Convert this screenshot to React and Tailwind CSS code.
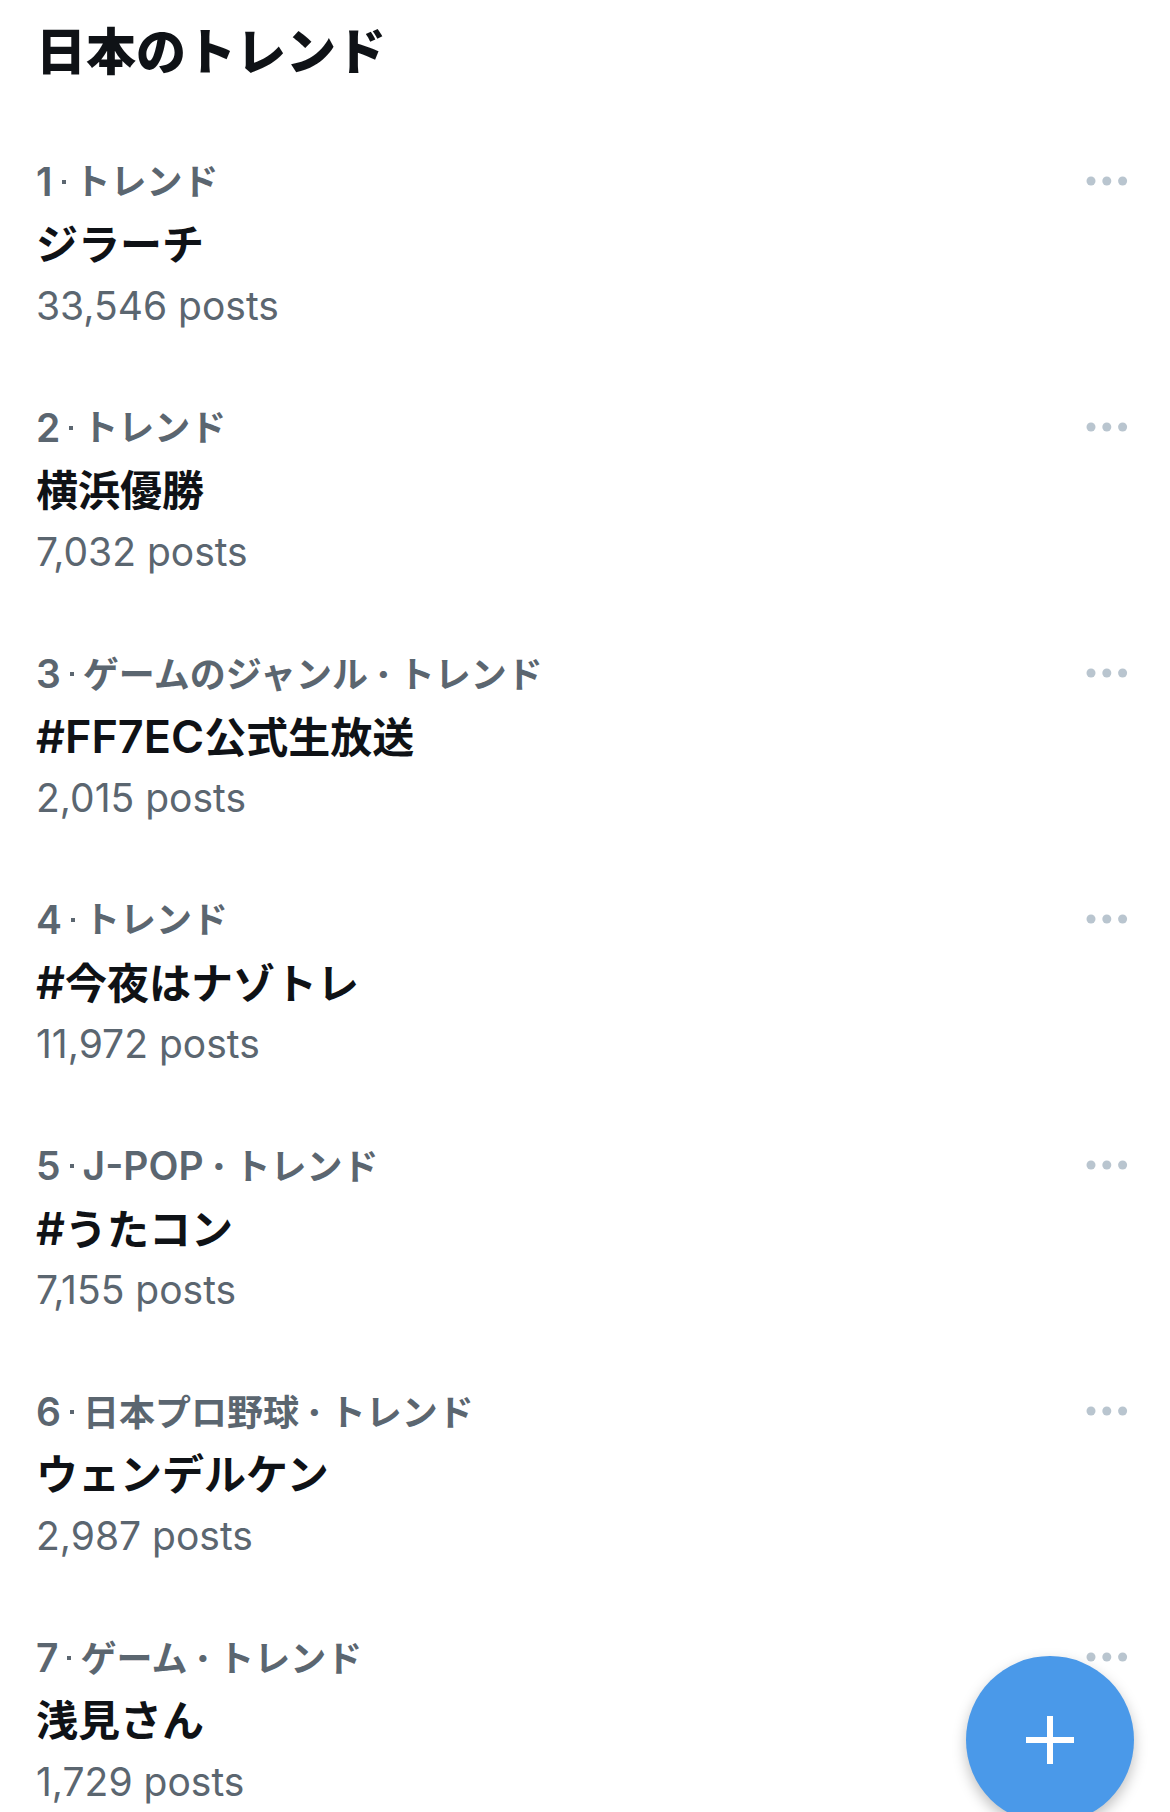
const TRENDS = [
  { rank: 1, meta: ['トレンド'], name: 'ジラーチ', posts: '33,546' },
  { rank: 2, meta: ['トレンド'], name: '横浜優勝', posts: '7,032' },
  { rank: 3, meta: ['ゲームのジャンル', 'トレンド'], name: '#FF7EC公式生放送', posts: '2,015' },
  { rank: 4, meta: ['トレンド'], name: '#今夜はナゾトレ', posts: '11,972' },
  { rank: 5, meta: ['J-POP', 'トレンド'], name: '#うたコン', posts: '7,155' },
  { rank: 6, meta: ['日本プロ野球', 'トレンド'], name: 'ウェンデルケン', posts: '2,987' },
  { rank: 7, meta: ['ゲーム', 'トレンド'], name: '浅見さん', posts: '1,729' },
];

// Latin runs are set slightly larger than the Japanese text around them
function MixedText({ text, latin }) {
  return text.split(/([\x21-\x7e]+)/).filter(Boolean).map((run, i) =>
    /^[\x21-\x7e]/.test(run)
      ? <span key={i} className={latin}>{run}</span>
      : run
  );
}

function MoreButton({ rank }) {
  return (
    <button
      type="button"
      aria-label={`More options for trend ${rank}`}
      className="flex h-[62px] w-[42px] flex-shrink-0 items-center justify-center text-[#b9c5cf]"
    >
      <svg viewBox="0 0 42 10" className="h-[10px] w-[42px]" fill="currentColor" aria-hidden="true">
        <circle cx="5" cy="5" r="4.5" />
        <circle cx="20.8" cy="5" r="4.5" />
        <circle cx="36.6" cy="5" r="4.5" />
      </svg>
    </button>
  );
}

function TrendItem({ trend }) {
  return (
    <li className="flex items-start justify-between">
      <div className="min-w-0">
        <p className="flex h-16 items-center gap-[9px] text-[36px] font-semibold leading-[62px] text-[#5b6670]">
          <span className="text-[39px]">{trend.rank}</span>
          <span className="h-1 w-1 bg-current" />
          <span>
            {trend.meta.map((part, i) => (
              <span key={part}>
                {i > 0 && <span className="text-[39px] font-extrabold"> · </span>}
                <MixedText text={part} latin="text-[39px]" />
              </span>
            ))}
          </span>
        </p>
        <h2 className="h-[62px] text-[42px] font-semibold leading-[62px] text-[#0f1216]">
          <MixedText text={trend.name} latin="text-[45px]" />
        </h2>
        <p className="h-[60px] text-[39px] leading-[60px] text-[#5b6670]">{trend.posts} posts</p>
      </div>
      <MoreButton rank={trend.rank} />
    </li>
  );
}

export default function App() {
  return (
    <main
      lang="ja"
      className="h-screen overflow-hidden bg-white font-[Inter,'Noto_Sans_CJK_JP',sans-serif]"
    >
      <h1 className="px-9 pt-5 text-[50px] font-black leading-[64px] text-[#0f1216]">日本のトレンド</h1>
      <ul className="flex flex-col gap-[60px] pl-9 pr-[42px] pt-[66px]">
        {TRENDS.map(trend => (
          <TrendItem key={trend.rank} trend={trend} />
        ))}
      </ul>
      <button
        type="button"
        aria-label="New post"
        className="fixed right-9 -bottom-3 flex h-42 w-42 items-center justify-center rounded-full bg-[#4a99e9] text-white shadow-[0_6px_14px_rgba(0,0,0,0.25)]"
      >
        <svg viewBox="0 0 48 48" className="h-12 w-12" stroke="currentColor" strokeWidth="6" aria-hidden="true">
          <path d="M24 0v48M0 24h48" />
        </svg>
      </button>
    </main>
  );
}
